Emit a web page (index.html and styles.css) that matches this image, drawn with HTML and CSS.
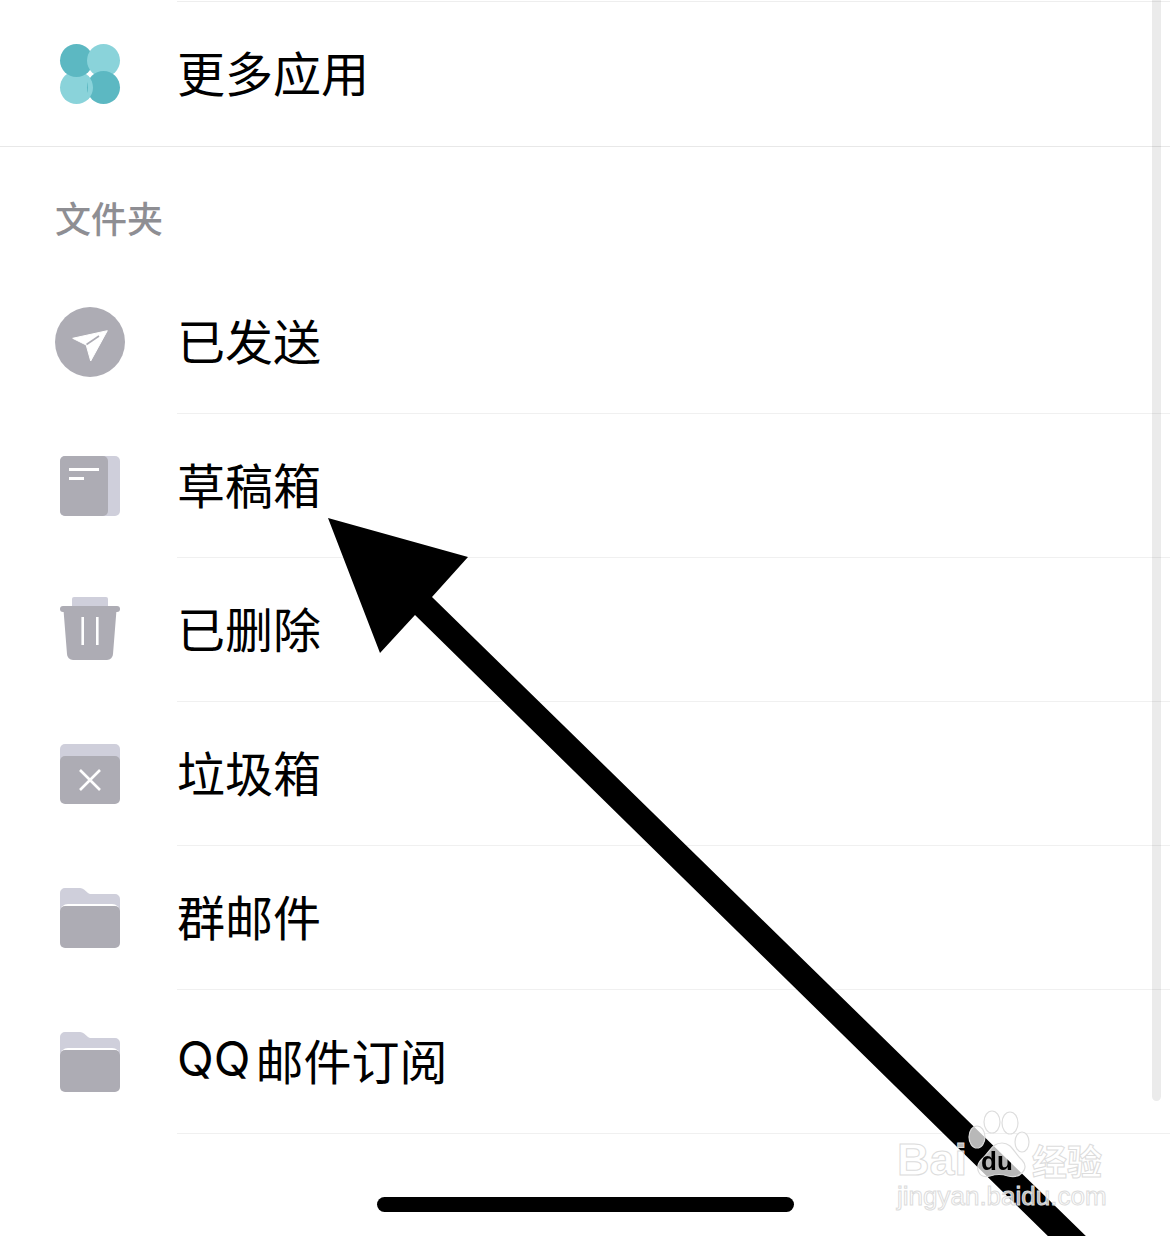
FILE: index.html
```html
<!DOCTYPE html>
<html lang="zh-CN">
<head>
  <meta charset="UTF-8">
  <meta name="viewport" content="width=device-width, initial-scale=1.0">
  <title>文件夹</title>
  <link rel="stylesheet" href="styles.css">
</head>
<body>

  <div class="screen">
    <div class="top-rule"></div>

    <div class="row row-apps">
      <div class="row-icon">
        <svg width="60" height="60" viewBox="0 0 60 60">
          <defs>
            <clipPath id="clover-right"><rect x="28" y="30" width="8" height="30"/></clipPath>
          </defs>
          <circle cx="16.5" cy="43.5" r="16.5" fill="#8ad3da"/>
          <circle cx="16.5" cy="16.5" r="16.5" fill="#5cb8c2"/>
          <circle cx="43.5" cy="16.5" r="16.5" fill="#8ad3da"/>
          <circle cx="43.5" cy="43.5" r="16.5" fill="#5cb8c2"/>
          <circle cx="16.5" cy="43.5" r="16.5" fill="#8ad3da" clip-path="url(#clover-right)"/>
        </svg>
      </div>
      <div class="row-body">更多应用</div>
    </div>

    <div class="section-title">文件夹</div>

    <div class="row">
      <div class="row-icon">
        <svg class="icon-round" width="70" height="70" viewBox="0 0 70 70">
          <circle cx="35" cy="35" r="35" fill="#adacb4"/>
          <path d="M17.7 31.3 L52.3 23.7 L35.7 54 L31.2 38 Z" fill="#fff" stroke="#fff" stroke-width="1" stroke-linejoin="round"/>
          <path d="M31.5 37.5 L44 29" stroke="#adacb4" stroke-width="1.6" fill="none"/>
        </svg>
      </div>
      <div class="row-body">已发送</div>
    </div>

    <div class="row">
      <div class="row-icon">
        <svg width="60" height="60" viewBox="0 0 60 60">
          <rect width="60" height="60" rx="5" fill="#cfcfdb"/>
          <rect width="48" height="60" rx="5" fill="#adacb4"/>
          <rect x="9" y="12" width="30" height="3" fill="#fff"/>
          <rect x="9" y="21" width="15" height="3" fill="#fff"/>
        </svg>
      </div>
      <div class="row-body">草稿箱</div>
    </div>

    <div class="row">
      <div class="row-icon">
        <svg width="60" height="60" viewBox="0 0 60 60">
          <path d="M12 8 V-1 a2 2 0 0 1 2 -2 H46 a2 2 0 0 1 2 2 V8 Z" fill="#cfcfdb"/>
          <rect x="0" y="6" width="60" height="6" rx="3" fill="#adacb4"/>
          <path d="M3.5 10 H56.5 L53 54 a6 6 0 0 1 -6 6 H13 a6 6 0 0 1 -6 -6 Z" fill="#adacb4"/>
          <path d="M22.7 17 V45 M37.3 17 V45" stroke="#fff" stroke-width="2.6" fill="none"/>
        </svg>
      </div>
      <div class="row-body">已删除</div>
    </div>

    <div class="row">
      <div class="row-icon">
        <svg width="60" height="60" viewBox="0 0 60 60">
          <rect width="60" height="40" rx="5" fill="#cfcfdb"/>
          <rect y="12" width="60" height="48" rx="5" fill="#adacb4"/>
          <path d="M20 26 L40 46 M40 26 L20 46" stroke="#fff" stroke-width="2.6" fill="none"/>
        </svg>
      </div>
      <div class="row-body">垃圾箱</div>
    </div>

    <div class="row">
      <div class="row-icon">
        <svg width="60" height="60" viewBox="0 0 60 60">
          <path d="M0 30 V5 a5 5 0 0 1 5 -5 H20 a6 6 0 0 1 4 1.5 L28 5 a4 4 0 0 0 3 1 H55 a5 5 0 0 1 5 5 V30 Z" fill="#cfcfdb"/>
          <path d="M0 24 a8 8 0 0 1 8 -8 H52 a8 8 0 0 1 8 8 V30 H0 Z" fill="#fff"/>
          <rect y="18" width="60" height="42" rx="5" fill="#adacb4"/>
        </svg>
      </div>
      <div class="row-body">群邮件</div>
    </div>

    <div class="row">
      <div class="row-icon">
        <svg width="60" height="60" viewBox="0 0 60 60">
          <path d="M0 30 V5 a5 5 0 0 1 5 -5 H20 a6 6 0 0 1 4 1.5 L28 5 a4 4 0 0 0 3 1 H55 a5 5 0 0 1 5 5 V30 Z" fill="#cfcfdb"/>
          <path d="M0 24 a8 8 0 0 1 8 -8 H52 a8 8 0 0 1 8 8 V30 H0 Z" fill="#fff"/>
          <rect y="18" width="60" height="42" rx="5" fill="#adacb4"/>
        </svg>
      </div>
      <div class="row-body"><span class="latin">QQ</span>邮件订阅</div>
    </div>

    <!-- things that sit on top of the list -->
    <div class="scrollbar"></div>
    <div class="home-bar"></div>

    <svg class="arrow" width="1170" height="1236" viewBox="0 0 1170 1236">
      <path d="M328 518 L468 557 L432 597 L1092 1242 L1054 1242 L415 615 L380 653 Z" fill="#000"/>
    </svg>

    <div class="watermark">
      <svg class="paw" width="70" height="75" viewBox="0 0 70 75">
        <defs>
          <mask id="du-cut" maskUnits="userSpaceOnUse" x="0" y="0" width="70" height="75">
            <rect width="70" height="75" fill="#fff"/>
            <text x="21" y="65" class="paw-du">du</text>
          </mask>
        </defs>
        <g fill="#fff" fill-opacity="0.72" stroke="#ddd" stroke-width="1.2">
          <ellipse cx="17" cy="32" rx="8" ry="11"/>
          <ellipse cx="32" cy="17" rx="8" ry="11"/>
          <ellipse cx="50" cy="18" rx="8" ry="11"/>
          <ellipse cx="62" cy="37" rx="7" ry="10"/>
          <path mask="url(#du-cut)" d="M42 38 C52 38 54 48 62 55 C70 64 60 74 48 71 C42 69 36 69 30 71 C18 74 14 62 22 54 C30 47 32 38 42 38 Z"/>
        </g>
      </svg>
      <div class="wm-logo"><span>Bai</span><span class="wm-cn">经验</span></div>
      <div class="wm-url">jingyan.baidu.com</div>
    </div>
  </div>

</body>
</html>
```

FILE: styles.css
```css
* {
  box-sizing: border-box;
}

body {
  margin: 0;
  background: #fff;
  font-family: "Noto Sans CJK SC", "Noto Sans", sans-serif;
  color: #000;
}

.screen {
  position: relative;
  width: 1170px;
  height: 1236px;
  overflow: hidden;
  background: #fff;
}

.top-rule {
  height: 2px;
  margin-left: 177px;
  border-bottom: 1px solid #eeeeee;
}

.row {
  display: flex;
  height: 144px;
}

.row-apps {
  height: 145px;
  border-bottom: 1px solid #e8e8e8;
}

.row-icon {
  width: 177px;
  padding-left: 60px;
  flex-shrink: 0;
  display: flex;
  align-items: center;
}

.row-icon svg {
  overflow: visible;
}

.row-icon .icon-round {
  margin-left: -5px;
}

.row-body {
  flex: 1;
  display: flex;
  align-items: center;
  padding-bottom: 6px;
  font-size: 48px;
  font-weight: 400;
  line-height: 1;
  border-bottom: 1px solid #f0f0f0;
}

.row-apps .row-body {
  border-bottom: none;
}

.latin {
  font-family: Inter, "Noto Sans", sans-serif;
  font-weight: 400;
  margin-right: 5px;
}

.section-title {
  height: 123px;
  padding-left: 55px;
  padding-top: 17px;
  display: flex;
  align-items: center;
  font-size: 36px;
  font-weight: 500;
  line-height: 1;
  color: #8e8e93;
}

.scrollbar {
  position: absolute;
  left: 1152px;
  top: 0;
  width: 9px;
  height: 1101px;
  border-radius: 0 0 5px 5px;
  background: rgba(0, 0, 0, 0.08);
}

.home-bar {
  position: absolute;
  left: 377px;
  top: 1197px;
  width: 417px;
  height: 15px;
  border-radius: 8px;
  background: #000;
}

.arrow {
  position: absolute;
  left: 0;
  top: 0;
}

.watermark {
  position: absolute;
  left: 890px;
  top: 1105px;
  width: 225px;
  height: 115px;
  color: rgba(255, 255, 255, 0.72);
  -webkit-text-stroke: 1px #dcdcdc;
  font-family: "Liberation Sans", sans-serif;
}

.paw {
  position: absolute;
  left: 70px;
  top: 0;
}

.paw-du {
  font-family: "Liberation Sans", sans-serif;
  font-size: 26px;
  font-weight: 700;
  fill: #000;
  stroke: none;
}

.wm-logo {
  position: absolute;
  left: 7px;
  top: 30px;
  display: flex;
  align-items: baseline;
  font-size: 45px;
  font-weight: 700;
  line-height: 50px;
}

.wm-cn {
  margin-left: 65px;
  font-family: "Noto Sans CJK SC", sans-serif;
  font-size: 35px;
}

.wm-url {
  position: absolute;
  left: 7px;
  top: 76px;
  font-size: 26px;
  line-height: 30px;
  white-space: nowrap;
}
```
